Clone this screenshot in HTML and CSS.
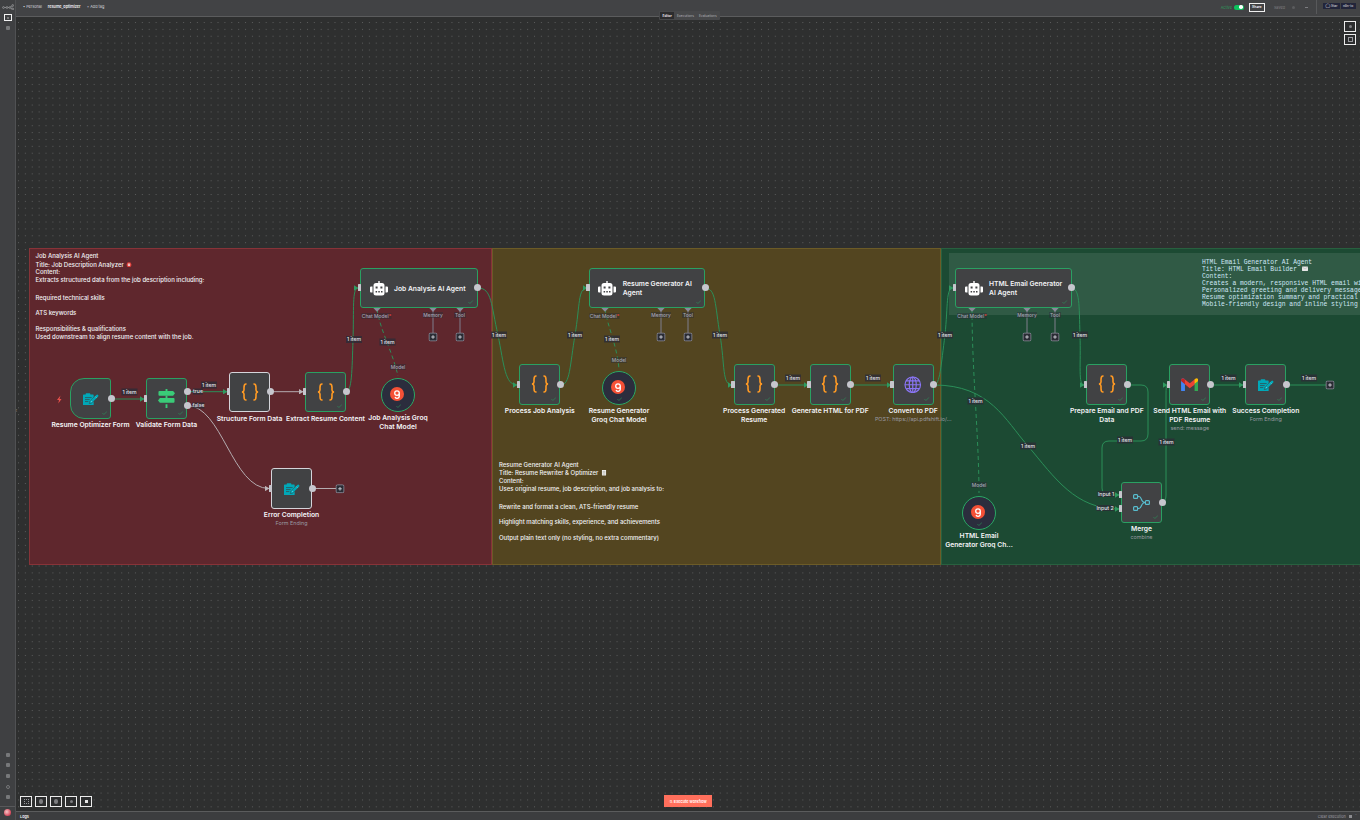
FILE: index.html
```html
<!DOCTYPE html>
<html lang="en">
<head>
<meta charset="utf-8">
<title>resume_optimizer - n8n</title>
<link rel="stylesheet" href="styles.css">
</head>
<body>
<svg class="defs" width="0" height="0" aria-hidden="true">
  <defs>
    <symbol id="i-form" viewBox="0 0 24 18">
      <path fill="#00a8b8" d="M0 3a1 1 0 0 1 1-1h3V1a1 1 0 0 1 1-1h5a1 1 0 0 1 1 1v1h4a1 1 0 0 1 1 1v14a1 1 0 0 1-1 1H1a1 1 0 0 1-1-1z"/>
      <path stroke="#35494c" stroke-width="1.100" d="M3 6.500h10M3 9.500h7M3 12.500h5"/>
      <path fill="#00a8b8" stroke="#414244" stroke-width="1.200" paint-order="stroke" d="M9.500 15.500l1.200-3.700 9.300-9.300a1.800 1.800 0 0 1 2.600 2.600l-9.300 9.300z"/>
      <path stroke="#d9f3f5" stroke-width=".7" d="M12 11.500l1.700 1.700M18.500 5l1.700 1.700"/>
    </symbol>
    <symbol id="i-if" viewBox="0 0 18 20">
      <path fill="#3acb78" d="M8 0h2v2h6l2 2.500L16 7H1.500a1 1 0 0 1-1-1V3a1 1 0 0 1 1-1H8zM2 9.500h14.500a1 1 0 0 1 1 1v3a1 1 0 0 1-1 1H2L0 12zM8 16h2v4H8z"/>
      <path fill="#3acb78" d="M8 7h2v2.500H8z"/>
    </symbol>
    <symbol id="i-code" viewBox="0 0 18 18">
      <path fill="none" stroke="#ff9a24" stroke-width="1.600" stroke-linecap="round" d="M5 1C3 1 3 2.500 3 4.500V7C3 8 2.300 8.800 1 9c1.300.2 2 1 2 2v2.500C3 15.500 3 17 5 17M13 1c2 0 2 1.500 2 3.500V7c0 1 .7 1.800 2 2-1.300.2-2 1-2 2v2.500c0 2 0 3.500-2 3.500"/>
    </symbol>
    <symbol id="i-globe" viewBox="0 0 18 18">
      <g fill="none" stroke="#8a75f5" stroke-width="1.200">
        <circle cx="9" cy="9" r="8"/><ellipse cx="9" cy="9" rx="3.600" ry="8"/>
        <path d="M1 9h16M2.200 5h13.600M2.200 13h13.600M9 1v16"/>
      </g>
    </symbol>
    <symbol id="i-gmail" viewBox="0 0 18 14">
      <path fill="#4285f4" d="M0 2.200C0 .5 2 -.4 3.200 .8L4 1.500V14H1.300A1.300 1.300 0 0 1 0 12.700z"/>
      <path fill="#ea4335" d="M4 1.500L9 5.500l5-4 1-.8v5.500L9 10.500 4 6.500z"/>
      <path fill="#34a853" d="M14 5.800l4-3V12.700A1.300 1.300 0 0 1 16.700 14H14z"/>
      <path fill="#fbbc04" d="M14 1.500l.8-.7C16 -.4 18 .5 18 2.200v.8l-4 3z"/>
      <path fill="#c5221f" d="M0 2.200v.8l4 3.500V1.500L3.200.8C2 -.4 0 .5 0 2.200z"/>
    </symbol>
    <symbol id="i-merge" viewBox="0 0 17 17">
      <g fill="none" stroke="#58bccd" stroke-width="1.200">
        <rect x=".6" y=".6" width="4" height="3.800" rx=".9"/>
        <rect x=".6" y="12.600" width="4" height="3.800" rx=".9"/>
        <rect x="12.400" y="6.600" width="4" height="3.800" rx=".9"/>
        <path d="M4.600 2.500h1.500C9 2.500 7.500 8.500 12.400 8.500M4.600 14.500h1.500C9 14.500 7.500 8.500 12.400 8.500"/>
      </g>
    </symbol>
    <symbol id="i-robot" viewBox="0 0 18 15">
      <path fill="#fff" d="M8.300 0h1.400v2H12a2.500 2.500 0 0 1 2.500 2.500V12a2.500 2.500 0 0 1-2.500 2.500H6A2.500 2.500 0 0 1 3.500 12V4.500A2.500 2.500 0 0 1 6 2h2.300zM0 6.500a1 1 0 0 1 1-1h1.500v6H1a1 1 0 0 1-1-1zM15.500 5.500H17a1 1 0 0 1 1 1v4a1 1 0 0 1-1 1h-1.500z"/>
      <path fill="#414244" d="M5.600 5.500h2v2h-2zM10.400 5.500h2v2h-2zM5.600 10h1.500v1.500H5.600zM8.300 10h1.500v1.500H8.300zM11 10h1.500v1.500H11z"/>
    </symbol>
    <symbol id="i-groq" viewBox="0 0 14 14">
      <circle cx="7" cy="7" r="7" fill="#f55036"/>
      <path fill="none" stroke="#fff" stroke-width="1.300" stroke-linecap="round" d="M9.300 6.100A2.300 2.300 0 1 1 7 3.800a2.300 2.300 0 0 1 2.300 2.300v3A2.200 2.200 0 0 1 7 11.300a2.200 2.200 0 0 1-1.700-.8"/>
    </symbol>
    <symbol id="i-check" viewBox="0 0 8 6">
      <path fill="none" stroke="#2f8f5a" stroke-width="1" d="M.5 3l2.300 2.300L7.500.5"/>
    </symbol>
    <symbol id="i-plus" viewBox="0 0 9 9">
      <rect x=".5" y=".5" width="8" height="8" rx="1.600" fill="#2a2c34" stroke="#8e8e9c"/>
      <path stroke="#d5d5dc" stroke-width=".9" d="M4.500 2.700v3.600M2.700 4.500h3.600"/>
    </symbol>
    <symbol id="i-diamond" viewBox="0 0 8 8">
      <path fill="#8a8a9a" d="M4 .3L7.700 4 4 7.700.3 4z"/>
    </symbol>
    <marker id="ah-g" viewBox="0 0 5 6" refX="4.500" refY="3" markerWidth="4.500" markerHeight="5.500" markerUnits="userSpaceOnUse" orient="auto"><path fill="#2f9a60" d="M0 0l5 3-5 3z"/></marker>
    <marker id="ah-w" viewBox="0 0 5 6" refX="4.500" refY="3" markerWidth="4.500" markerHeight="5.500" markerUnits="userSpaceOnUse" orient="auto"><path fill="#bdb5b9" d="M0 0l5 3-5 3z"/></marker>
    <pattern id="dots" width="6.880" height="6.880" patternUnits="userSpaceOnUse" x="18" y="22">
      <rect width="1" height="1" fill="#5a5b5b"/>
    </pattern>
  </defs>
</svg>

<div class="app">
  <aside class="sidebar">
    <svg class="logo" viewBox="0 0 12 6"><g fill="none" stroke="#8f9092" stroke-width=".9"><circle cx="1.500" cy="3.500" r=".9"/><circle cx="5" cy="3.500" r=".9"/><circle cx="8" cy="3.500" r=".9"/><circle cx="10.700" cy="1.500" r=".9"/><circle cx="10.700" cy="5" r=".9"/><path d="M2.400 3.500h1.700M5.900 3.500h1.200M8.700 3l1.200-1.200M8.700 4l1.200.9"/></g></svg>
    <span class="side-box"><i class="side-dot"></i></span>
    <i class="side-icon side-icon-top"></i>
    <span class="side-spacer"></span>
    <i class="side-icon"></i>
    <i class="side-icon"></i>
    <i class="side-icon"></i>
    <i class="side-icon side-ring"></i>
    <i class="side-icon"></i>
    <span class="side-sep"></span>
    <i class="avatar"></i>
  </aside>

  <div class="main">
    <header class="topbar">
      <div class="crumbs">
        <span class="crumb">▪ Personal</span>
        <span class="crumb crumb-name">resume_optimizer</span>
        <span class="crumb">+ Add tag</span>
      </div>
      <div class="actions">
        <span class="active-label">Active</span>
        <span class="toggle"><i></i></span>
        <span class="share">Share</span>
        <span class="saved">Saved</span>
        <i class="hist"></i>
        <span class="dash"></span>
        <span class="gh">
          <span class="gh-btn gh-star">◯ Star</span>
          <span class="gh-btn gh-repo">n8n-io</span>
        </span>
      </div>
    </header>

    <div class="view-tabs">
      <span class="tab tab-on">Editor</span>
      <span class="tab">Executions</span>
      <span class="tab">Evaluations</span>
    </div>

    <main class="canvas">
      <div class="world">
        <svg class="grid" width="1360" height="820"><rect width="1360" height="820" fill="url(#dots)"/></svg>

        <div class="sticky sticky-red">
          <p class="sl">Job Analysis AI Agent</p>
          <p class="sl g2">Title: Job Description Analyzer <svg class="emoji" viewBox="0 0 8 8"><circle cx="4" cy="4" r="3.500" fill="#e2413c"/><circle cx="4" cy="4" r="1.700" fill="#f3f3f3"/><circle cx="4" cy="4" r=".8" fill="#e2413c"/></svg></p>
          <p class="sl">Content:</p>
          <p class="sl">Extracts structured data from the job description including:</p>
          <p class="sl g10">Required technical skills</p>
          <p class="sl g7">ATS keywords</p>
          <p class="sl g8">Responsibilities &amp; qualifications</p>
          <p class="sl">Used downstream to align resume content with the job.</p>
        </div>

        <div class="sticky sticky-olive">
          <p class="sl">Resume Generator AI Agent</p>
          <p class="sl g2">Title: Resume Rewriter &amp; Optimizer <svg class="emoji" viewBox="0 0 8 8"><path fill="#f1f1ee" d="M1 0h6v8H1z"/><path stroke="#8b8b84" stroke-width=".7" d="M2 2h4M2 4h4M2 6h4"/></svg></p>
          <p class="sl">Content:</p>
          <p class="sl">Uses original resume, job description, and job analysis to:</p>
          <p class="sl g10">Rewrite and format a clean, ATS-friendly resume</p>
          <p class="sl g7">Highlight matching skills, experience, and achievements</p>
          <p class="sl g8">Output plain text only (no styling, no extra commentary)</p>
        </div>

        <div class="sticky sticky-green">
          <div class="code-block">
            <p class="ml">HTML Email Generator AI Agent</p>
            <p class="ml">Title: HTML Email Builder <svg class="emoji" viewBox="0 0 8 6"><rect width="8" height="6" rx=".6" fill="#e6e6e6"/><path fill="none" stroke="#9a9a9a" stroke-width=".5" d="M0 .5l4 2.800L8 .5"/></svg></p>
            <p class="ml">Content:</p>
            <p class="ml">Creates a modern, responsive HTML email with the resume</p>
            <p class="ml">Personalized greeting and delivery message for the applicant</p>
            <p class="ml">Resume optimization summary and practical tips</p>
            <p class="ml">Mobile-friendly design and inline styling for all clients</p>
          </div>
        </div>

        <svg class="edges" width="1360" height="820">
          <g class="edge green">
            <path d="M111 399H144" marker-end="url(#ah-g)"/>
            <path d="M187 391.700H227" marker-end="url(#ah-g)"/>
            <path d="M346 391.700C352 391.700 352 370 353 340C354 310 352 288 358 288" marker-end="url(#ah-g)"/>
            <path d="M478 288C492 288 491 305 498 335C504 365 505 385 517 385" marker-end="url(#ah-g)"/>
            <path d="M561 385C570 385 570 365 575 335C580 305 578 288 587 288" marker-end="url(#ah-g)"/>
            <path d="M705 288C716 288 715 305 720 335C725 365 722 385 732 385" marker-end="url(#ah-g)"/>
            <path d="M775 385H808" marker-end="url(#ah-g)"/>
            <path d="M851 385H891" marker-end="url(#ah-g)"/>
            <path d="M934 385C940 385 941 365 945 335C948 305 946 288 953 288" marker-end="url(#ah-g)"/>
            <path d="M934 385C990 385 1005 420 1028 446C1055 478 1075 509 1119 509" marker-end="url(#ah-g)"/>
            <path d="M1071 288C1080 288 1079 305 1080 335C1081 365 1078 385 1084 385" marker-end="url(#ah-g)"/>
            <path d="M1127 385H1141Q1148 385 1148 392V434Q1148 441 1141 441H1109Q1102 441 1102 448V488Q1102 495 1110 495H1119" marker-end="url(#ah-g)"/>
            <path d="M1162 502Q1166 502 1166 495V395Q1166 385 1167 385" marker-end="url(#ah-g)"/>
            <path d="M1210 385H1243" marker-end="url(#ah-g)"/>
            <path d="M1286 385H1326"/>
          </g>
          <g class="edge white">
            <path d="M187 405.500C222 405.500 232 488.500 269 488.500" marker-end="url(#ah-w)"/>
            <path d="M270 391.700H303" marker-end="url(#ah-w)"/>
            <path d="M312 488.500H336"/>
          </g>
          <g class="edge dashed">
            <path d="M377 309C380 330 392 350 398 376"/>
            <path d="M605 309C607 325 617 345 619 369"/>
            <path d="M972 309C972 370 979 440 979 493"/>
          </g>
          <g class="stem">
            <path d="M433 309V333M460 309V333M661 309V333M688 309V333M1027 309V333M1055 309V333"/>
          </g>

          <use href="#i-diamond" x="373" y="304" width="8" height="8"/>
          <use href="#i-diamond" x="429" y="304" width="8" height="8"/>
          <use href="#i-diamond" x="456" y="304" width="8" height="8"/>
          <use href="#i-diamond" x="601" y="304" width="8" height="8"/>
          <use href="#i-diamond" x="657" y="304" width="8" height="8"/>
          <use href="#i-diamond" x="684" y="304" width="8" height="8"/>
          <use href="#i-diamond" x="968" y="304" width="8" height="8"/>
          <use href="#i-diamond" x="1023" y="304" width="8" height="8"/>
          <use href="#i-diamond" x="1051" y="304" width="8" height="8"/>

          <use href="#i-plus" x="428.500" y="332.500" width="9" height="9"/>
          <use href="#i-plus" x="455.500" y="332.500" width="9" height="9"/>
          <use href="#i-plus" x="656.500" y="332.500" width="9" height="9"/>
          <use href="#i-plus" x="683.500" y="332.500" width="9" height="9"/>
          <use href="#i-plus" x="1022.500" y="332.500" width="9" height="9"/>
          <use href="#i-plus" x="1050.500" y="332.500" width="9" height="9"/>
          <use href="#i-plus" x="335.500" y="484.300" width="9" height="9"/>
          <use href="#i-plus" x="1325.500" y="380.500" width="9" height="9"/>

          <g class="tags">
            <g transform="translate(129.500 392)"><rect x="-8" y="-3.500" width="16" height="7"/><text y="1.900">1 item</text></g>
            <g transform="translate(209 385)"><rect x="-8" y="-3.500" width="16" height="7"/><text y="1.900">1 item</text></g>
            <g transform="translate(354 339.500)"><rect x="-8" y="-3.500" width="16" height="7"/><text y="1.900">1 item</text></g>
            <g transform="translate(387.500 342)"><rect x="-8" y="-3.500" width="16" height="7"/><text y="1.900">1 item</text></g>
            <g transform="translate(499 335)"><rect x="-8" y="-3.500" width="16" height="7"/><text y="1.900">1 item</text></g>
            <g transform="translate(575 335)"><rect x="-8" y="-3.500" width="16" height="7"/><text y="1.900">1 item</text></g>
            <g transform="translate(612 339)"><rect x="-8" y="-3.500" width="16" height="7"/><text y="1.900">1 item</text></g>
            <g transform="translate(720 335)"><rect x="-8" y="-3.500" width="16" height="7"/><text y="1.900">1 item</text></g>
            <g transform="translate(793 378)"><rect x="-8" y="-3.500" width="16" height="7"/><text y="1.900">1 item</text></g>
            <g transform="translate(873 378)"><rect x="-8" y="-3.500" width="16" height="7"/><text y="1.900">1 item</text></g>
            <g transform="translate(945 335)"><rect x="-8" y="-3.500" width="16" height="7"/><text y="1.900">1 item</text></g>
            <g transform="translate(975.500 401)"><rect x="-8" y="-3.500" width="16" height="7"/><text y="1.900">1 item</text></g>
            <g transform="translate(1028 446)"><rect x="-8" y="-3.500" width="16" height="7"/><text y="1.900">1 item</text></g>
            <g transform="translate(1080 335)"><rect x="-8" y="-3.500" width="16" height="7"/><text y="1.900">1 item</text></g>
            <g transform="translate(1125 440)"><rect x="-8" y="-3.500" width="16" height="7"/><text y="1.900">1 item</text></g>
            <g transform="translate(1166.500 442)"><rect x="-8" y="-3.500" width="16" height="7"/><text y="1.900">1 item</text></g>
            <g transform="translate(1228.500 378)"><rect x="-8" y="-3.500" width="16" height="7"/><text y="1.900">1 item</text></g>
            <g transform="translate(1309 378)"><rect x="-8" y="-3.500" width="16" height="7"/><text y="1.900">1 item</text></g>

            <g transform="translate(198 391.500)"><rect x="-5" y="-3" width="10" height="6"/><text y="1.800">true</text></g>
            <g transform="translate(198.500 405.500)"><rect x="-6" y="-3" width="12" height="6"/><text y="1.800">false</text></g>
            <g transform="translate(1106 494)"><rect x="-8.500" y="-3" width="17" height="6"/><text y="1.800">Input 1</text></g>
            <g transform="translate(1105 508)"><rect x="-8.500" y="-3" width="17" height="6"/><text y="1.800">Input 2</text></g>
          </g>
          <g class="tags port">
            <g transform="translate(376.500 316)"><rect x="-15" y="-3" width="30" height="6"/><text y="1.800">Chat Model<tspan class="req">*</tspan></text></g>
            <g transform="translate(433 315)"><rect x="-10" y="-3" width="20" height="6"/><text y="1.800">Memory</text></g>
            <g transform="translate(460 315)"><rect x="-6" y="-3" width="12" height="6"/><text y="1.800">Tool</text></g>
            <g transform="translate(604.500 316)"><rect x="-15" y="-3" width="30" height="6"/><text y="1.800">Chat Model<tspan class="req">*</tspan></text></g>
            <g transform="translate(661 315)"><rect x="-10" y="-3" width="20" height="6"/><text y="1.800">Memory</text></g>
            <g transform="translate(688 315)"><rect x="-6" y="-3" width="12" height="6"/><text y="1.800">Tool</text></g>
            <g transform="translate(972 316)"><rect x="-15" y="-3" width="30" height="6"/><text y="1.800">Chat Model<tspan class="req">*</tspan></text></g>
            <g transform="translate(1027 315)"><rect x="-10" y="-3" width="20" height="6"/><text y="1.800">Memory</text></g>
            <g transform="translate(1055 315)"><rect x="-6" y="-3" width="12" height="6"/><text y="1.800">Tool</text></g>
            <g transform="translate(398 367)"><rect x="-8" y="-3" width="16" height="6"/><text y="1.800">Model</text></g>
            <g transform="translate(619 360)"><rect x="-8" y="-3" width="16" height="6"/><text y="1.800">Model</text></g>
            <g transform="translate(979 485)"><rect x="-8" y="-3" width="16" height="6"/><text y="1.800">Model</text></g>
          </g>
          <path class="bolt" d="M60.500 395.500L57 400h2l-.7 3.500L61.500 399h-2z"/>
        </svg>

        <div class="node trigger n-form">
          <svg class="ico ico-form"><use href="#i-form"/></svg><svg class="tick"><use href="#i-check"/></svg><i class="out"></i>
          <div class="label">Resume Optimizer Form</div>
        </div>
        <div class="node n-validate">
          <svg class="ico ico-if"><use href="#i-if"/></svg><svg class="tick"><use href="#i-check"/></svg><i class="in"></i><i class="out out-top"></i><i class="out out-bottom"></i>
          <div class="label">Validate Form Data</div>
        </div>
        <div class="node pale n-structure">
          <svg class="ico ico-code"><use href="#i-code"/></svg><i class="in"></i><i class="out"></i>
          <div class="label">Structure Form Data</div>
        </div>
        <div class="node n-extract">
          <svg class="ico ico-code"><use href="#i-code"/></svg><svg class="tick"><use href="#i-check"/></svg><i class="in"></i><i class="out"></i>
          <div class="label">Extract Resume Content</div>
        </div>
        <div class="node pale n-error">
          <svg class="ico ico-form"><use href="#i-form"/></svg><i class="in"></i><i class="out"></i>
          <div class="label">Error Completion<small>Form Ending</small></div>
        </div>
        <div class="node agent n-agent1">
          <svg class="robot"><use href="#i-robot"/></svg>
          <span class="agent-name">Job Analysis AI Agent</span>
          <svg class="tick"><use href="#i-check"/></svg><i class="in"></i><i class="out"></i>
        </div>
        <div class="node round n-groq1">
          <svg class="groq"><use href="#i-groq"/></svg><svg class="tick tick-round"><use href="#i-check"/></svg>
          <div class="label">Job Analysis Groq<br>Chat Model</div>
        </div>

        <div class="node n-pja">
          <svg class="ico ico-code"><use href="#i-code"/></svg><svg class="tick"><use href="#i-check"/></svg><i class="in"></i><i class="out"></i>
          <div class="label">Process Job Analysis</div>
        </div>
        <div class="node agent n-agent2">
          <svg class="robot"><use href="#i-robot"/></svg>
          <span class="agent-name">Resume Generator AI<br>Agent</span>
          <svg class="tick"><use href="#i-check"/></svg><i class="in"></i><i class="out"></i>
        </div>
        <div class="node round n-groq2">
          <svg class="groq"><use href="#i-groq"/></svg><svg class="tick tick-round"><use href="#i-check"/></svg>
          <div class="label">Resume Generator<br>Groq Chat Model</div>
        </div>
        <div class="node n-pgr">
          <svg class="ico ico-code"><use href="#i-code"/></svg><svg class="tick"><use href="#i-check"/></svg><i class="in"></i><i class="out"></i>
          <div class="label">Process Generated<br>Resume</div>
        </div>
        <div class="node n-html">
          <svg class="ico ico-code"><use href="#i-code"/></svg><svg class="tick"><use href="#i-check"/></svg><i class="in"></i><i class="out"></i>
          <div class="label">Generate HTML for PDF</div>
        </div>
        <div class="node n-pdf">
          <svg class="ico ico-globe"><use href="#i-globe"/></svg><svg class="tick"><use href="#i-check"/></svg><i class="in"></i><i class="out"></i>
          <div class="label">Convert to PDF<small>POST: https://api.pdfshift.io/...</small></div>
        </div>

        <div class="node agent n-agent3">
          <svg class="robot"><use href="#i-robot"/></svg>
          <span class="agent-name">HTML Email Generator<br>AI Agent</span>
          <svg class="tick"><use href="#i-check"/></svg><i class="in"></i><i class="out"></i>
        </div>
        <div class="node n-prep">
          <svg class="ico ico-code"><use href="#i-code"/></svg><svg class="tick"><use href="#i-check"/></svg><i class="in"></i><i class="out"></i>
          <div class="label">Prepare Email and PDF<br>Data</div>
        </div>
        <div class="node n-send">
          <svg class="ico ico-gmail"><use href="#i-gmail"/></svg><svg class="tick"><use href="#i-check"/></svg><i class="in"></i><i class="out"></i>
          <div class="label">Send HTML Email with<br>PDF Resume<small>send: message</small></div>
        </div>
        <div class="node n-success">
          <svg class="ico ico-form"><use href="#i-form"/></svg><svg class="tick"><use href="#i-check"/></svg><i class="in"></i><i class="out"></i>
          <div class="label">Success Completion<small>Form Ending</small></div>
        </div>
        <div class="node n-merge">
          <svg class="ico ico-merge"><use href="#i-merge"/></svg><svg class="tick"><use href="#i-check"/></svg><i class="in in-top"></i><i class="in in-bottom"></i><i class="out"></i>
          <div class="label">Merge<small>combine</small></div>
        </div>
        <div class="node round n-groq3">
          <svg class="groq"><use href="#i-groq"/></svg><svg class="tick tick-round"><use href="#i-check"/></svg>
          <div class="label">HTML Email<br>Generator Groq Ch...</div>
        </div>
      </div>

      <span class="collapse">‹</span>

      <div class="corner-tools">
        <span class="tool"><i class="tool-dot"></i></span>
        <span class="tool"><i class="tool-sq"></i></span>
      </div>

      <div class="zoom-tools">
        <span class="tool tool-wide"><i class="tool-frame"></i></span>
        <span class="tool tool-wide"><i class="tool-dot tool-dot-lg"></i></span>
        <span class="tool tool-wide"><i class="tool-dot tool-dot-lg"></i></span>
        <span class="tool tool-wide"><i class="tool-dot"></i></span>
        <span class="tool tool-wide tool-dark"><i class="tool-dot tool-white"></i></span>
      </div>

      <button class="execute"><span class="flask">⚗</span> Execute workflow</button>
    </main>

    <footer class="logs">
      <span class="logs-title">Logs</span>
      <span class="logs-right">Clear execution <i class="logs-ico"></i> <span class="logs-chev">⌃</span></span>
    </footer>
  </div>
</div>
</body>
</html>
```

FILE: styles.css
```css
* { box-sizing: border-box; }
html, body { margin: 0; height: 100%; background: #2e2f2f; overflow: hidden; }
body { font-family: Inter, "Liberation Sans", sans-serif; color: #f2f2f5; }
p { margin: 0; }
.defs { position: absolute; }

.app { display: flex; width: 1360px; height: 820px; }

/* sidebar */
.sidebar { width: 16px; flex: none; background: #3f4042; border-right: 1px solid #505153; display: flex; flex-direction: column; align-items: center; padding-top: 4px; }
.logo { width: 12px; height: 6px; margin-left: 1px; }
.side-box { width: 8px; height: 7px; border: 1px solid #f2f2f2; margin-top: 4px; display: flex; align-items: center; justify-content: center; margin-bottom: 5px; }
.side-dot { width: 2px; height: 2px; background: #777; }
.side-icon { display: block; width: 4px; height: 4px; background: #77787a; border-radius: 1px; margin-bottom: 6.700px; }
.side-icon-top { margin-bottom: 0; }
.side-ring { background: none; border: 1px solid #77787a; border-radius: 50%; }
.side-spacer { flex: 1; }
.side-sep { width: 100%; height: 1px; background: #58595b; margin-bottom: 2px; }
.avatar { width: 7px; height: 7px; border-radius: 50%; background: radial-gradient(circle at 40% 40%, #f5c6c6, #d8455a 70%); margin-bottom: 4px; }

.main { position: relative; flex: 1; min-width: 0; display: flex; flex-direction: column; }

/* header */
.topbar { height: 17px; flex: none; background: #424345; border-bottom: 1px solid #5b5c5d; display: flex; align-items: center; justify-content: space-between; font-size: 3.800px; }
.crumbs { display: flex; gap: 6px; margin-left: 7px; margin-bottom: 3px; color: #d4d4dc; }
.crumb-name { color: #f4f4f8; font-weight: 600; }
.actions { display: flex; align-items: center; height: 100%; padding-bottom: 2px; }
.active-label { color: #2e9b5c; margin-right: 2px; }
.toggle { width: 10px; height: 5px; border-radius: 3px; background: #0cc35d; display: flex; justify-content: flex-end; align-items: center; padding-right: 1px; }
.toggle i { width: 3.500px; height: 3.500px; background: #fff; border-radius: 50%; }
.share { width: 16px; height: 9px; border: 1px solid #f0f0f0; margin-left: 5px; display: flex; align-items: center; justify-content: center; font-weight: 600; font-size: 3.400px; }
.saved { color: #808084; margin-left: 9px; }
.hist { width: 3px; height: 3px; background: #5b5c5e; border-radius: 50%; margin-left: 7px; }
.dash { width: 3px; height: 1px; background: #7c7c80; margin-left: 10px; }
.gh { display: flex; align-items: center; gap: 0; align-self: stretch; width: 44px; flex: none; border-left: 1px solid #58595b; margin-left: 8px; padding: 0 0 3px 6px; }
.gh-btn { background: #22253a; color: #e4e4ea; height: 6px; line-height: 6px; text-align: center; font-size: 3.300px; white-space: nowrap; }
.gh-star { width: 17px; }
.gh-repo { width: 15px; margin-left: .5px; }

/* tabs straddle the header edge */
.view-tabs { position: absolute; left: 643px; top: 11px; height: 9px; display: flex; align-items: center; background: #47484a; border-radius: 1px; padding: 0 1px; font-size: 3.300px; z-index: 2; }
.tab { padding: 1.500px 2.500px; color: #b2b2b8; }
.tab-on { background: #2c2c2e; color: #f4f4f4; font-weight: 600; }

/* canvas */
.canvas { position: relative; flex: 1; min-height: 0; overflow: hidden; background: #2e2f2f; }
.world { position: absolute; left: -16px; top: -17px; width: 1360px; height: 820px; }
.grid, .edges { position: absolute; left: 0; top: 0; }

/* stickies */
.sticky { position: absolute; top: 247.500px; height: 317px; border: 1px solid; font-weight: 500; font-size: 6px; }
.sticky-red { left: 28.500px; width: 463px; background: #5f272d; border-color: #873338; padding: 3.400px 6px; }
.sticky-olive { left: 491.500px; width: 449px; background: #534520; border-color: #6c5b27; padding: 212px 6.500px 0; }
.sticky-green { left: 940.500px; width: 440px; background: #1c4a33; border-color: #28603f; padding: 4px 0 0 7px; }
.sl { height: 7.600px; line-height: 7.600px; white-space: nowrap; }
.g2 { margin-top: 1.400px; }
.g10 { margin-top: 10.400px; }
.g7 { margin-top: 7.400px; }
.g8 { margin-top: 8.400px; }
.emoji { width: 6px; height: 5.500px; vertical-align: -0.500px; margin-left: 1px; }
.code-block { height: 62px; background: #305a45; padding: 6.500px 0 0 253.500px; font-family: "Liberation Mono", monospace; font-size: 6.330px; color: #cfe7f6; overflow: hidden; }
.ml { height: 7px; line-height: 7px; white-space: nowrap; }

/* edges */
.edge path { fill: none; stroke-width: 1; }
.edge.green path { stroke: #2b8f59; }
.edge.white path { stroke: #b4acb0; }
.edge.dashed path { stroke: #2b8f59; stroke-dasharray: 4 3; }
.stem path { stroke: #7f7f8d; stroke-width: 1; fill: none; }
.tags rect { fill: #2b2c36; opacity: .78; }
.tags text { fill: #e2e2e8; font-size: 5.200px; font-weight: 500; text-anchor: middle; }
.port rect { opacity: .45; }
.port text { fill: #a5a5b4; font-size: 4.900px; }
.req { fill: #f0443c; }
.bolt { fill: #e8504a; }

/* nodes */
.node { position: absolute; width: 41px; height: 40.700px; background: #414244; border: 1.400px solid #2aa062; border-radius: 3px; }
.pale { border-color: #d4d4da; }
.trigger { border-radius: 14px 3px 3px 14px; }
.agent { height: 40.700px; display: flex; align-items: center; }
.round { width: 34px; height: 34px; background: #2b2d3d; border: 1.700px solid #2aa865; border-radius: 50%; }
.ico { position: absolute; }
.ico-form { width: 16px; height: 12.500px; left: 11.500px; top: 13.500px; }
.ico-if { width: 17px; height: 19px; left: 11px; top: 10px; }
.ico-code { width: 18px; height: 18px; left: 10.500px; top: 10px; }
.ico-globe { width: 17.500px; height: 17.500px; left: 10.700px; top: 10.500px; }
.ico-gmail { width: 17.500px; height: 13.500px; left: 10.700px; top: 12.500px; }
.ico-merge { width: 17px; height: 17px; left: 11px; top: 11px; }
.robot { width: 18px; height: 15px; margin-left: 8.500px; flex: none; }
.agent-name { margin-left: 6.500px; font-size: 6.750px; line-height: 9px; font-weight: 600; white-space: nowrap; }
.groq { position: absolute; width: 14px; height: 14px; left: 8.300px; top: 8.300px; }
.tick { position: absolute; width: 5.500px; height: 4px; right: 3px; bottom: 3px; }
.tick-round { right: 13px; bottom: 3.500px; }
.out { position: absolute; width: 7px; height: 7px; border-radius: 50%; background: #c6c6cd; right: -4.800px; top: 15.500px; }
.out-top { top: 9.200px; }
.out-bottom { top: 22.700px; }
.in { position: absolute; width: 3.500px; height: 7px; background: #c6c6cd; border-radius: .5px; left: -3.400px; top: 15.500px; }
.in-top { top: 8.200px; }
.in-bottom { top: 22.200px; }
.label { position: absolute; left: 50%; top: 100%; transform: translateX(-50%); margin-top: 2.200px; text-align: center; white-space: nowrap; font-size: 6.750px; line-height: 9px; font-weight: 600; color: #f4f4f7; }
.label small { display: block; font-size: 5.400px; line-height: 9.500px; font-weight: 400; color: #9a9aa2; }

.n-form { left: 70px; top: 378.300px; }
.n-validate { left: 146px; top: 378.300px; }
.n-structure { left: 229px; top: 371.700px; }
.n-extract { left: 305px; top: 371.700px; }
.n-error { left: 271px; top: 468.300px; }
.n-agent1 { left: 360px; top: 267.700px; width: 117.700px; }
.n-groq1 { left: 381px; top: 378px; }
.n-pja { left: 519.300px; top: 364.300px; }
.n-agent2 { left: 588.700px; top: 267.700px; width: 116.700px; }
.n-groq2 { left: 602px; top: 371px; }
.n-pgr { left: 733.700px; top: 364.300px; }
.n-html { left: 809.700px; top: 364.300px; }
.n-pdf { left: 892.700px; top: 364.300px; }
.n-agent3 { left: 955px; top: 267.700px; width: 116.700px; }
.n-prep { left: 1086.300px; top: 364.300px; }
.n-send { left: 1169.300px; top: 364.300px; }
.n-success { left: 1245.300px; top: 364.300px; }
.n-merge { left: 1121px; top: 482.300px; }
.n-groq3 { left: 962px; top: 496px; }

/* overlays */
.collapse { position: absolute; left: -1px; top: 390px; color: #8c8c8c; font-size: 6px; line-height: 6px; }
.corner-tools { position: absolute; right: 4px; top: 4px; display: flex; flex-direction: column; gap: 2px; }
.tool { width: 12px; height: 11px; border: 1px solid #ececec; background: #2c2d2e; display: flex; align-items: center; justify-content: center; }
.tool-wide { height: 11.500px; }
.tool-dot { width: 3px; height: 3px; background: #7d7d80; border-radius: 50%; }
.tool-dot-lg { width: 4.500px; height: 4.500px; }
.tool-sq { width: 5px; height: 5px; border: 1px solid #9a9a9e; }
.tool-frame { width: 5px; height: 5px; border: 1px dotted #9a9a9e; }
.tool-white { background: #e6e6e6; border-radius: 0; }
.zoom-tools { position: absolute; left: 4px; bottom: 4px; display: flex; gap: 3px; }
.execute { position: absolute; left: 648px; bottom: 4px; width: 47.500px; height: 12px; border: 0; padding: 0; background: #ff6f5c; color: #fff; font: 600 3.800px Inter, "Liberation Sans", sans-serif; white-space: nowrap; }
.flask { color: #ffd6cf; }

/* footer */
.logs { height: 9px; flex: none; background: #3c3d3f; border-top: 1px solid #5b5c5d; display: flex; align-items: center; justify-content: space-between; padding: 0 3px 0 4px; font-size: 3.800px; }
.logs-title { font-weight: 600; }
.logs-right { display: flex; align-items: center; gap: 3px; color: #9d9da3; }
.logs-ico { width: 3px; height: 3px; background: #8c8c90; }
.logs-chev { font-size: 3px; }
```
